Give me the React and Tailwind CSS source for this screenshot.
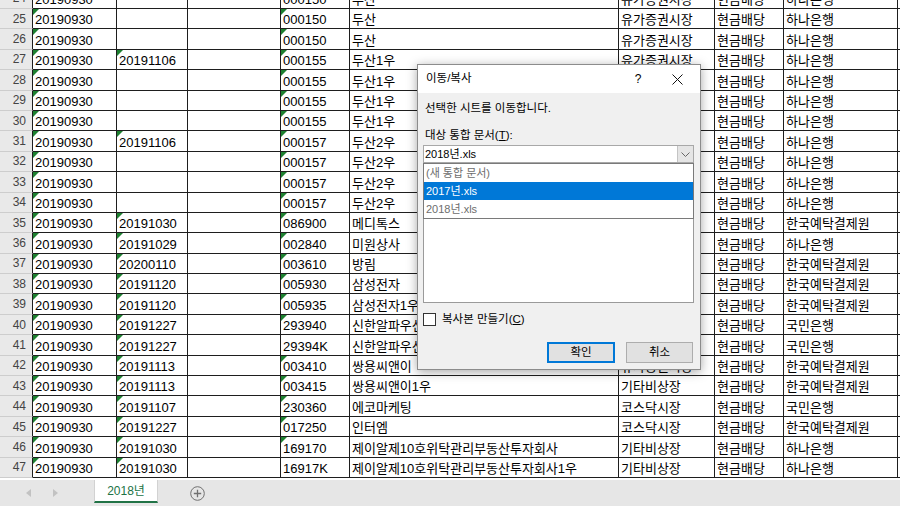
import React from "react";

// visible part of the sheet: rows 24..47
const rows = [
  [24, "20190930", "", "", "000150", "두산", "유가증권시장", "현금배당", "하나은행"],
  [25, "20190930", "", "", "000150", "두산", "유가증권시장", "현금배당", "하나은행"],
  [26, "20190930", "", "", "000150", "두산", "유가증권시장", "현금배당", "하나은행"],
  [27, "20190930", "20191106", "", "000155", "두산1우", "유가증권시장", "현금배당", "하나은행"],
  [28, "20190930", "", "", "000155", "두산1우", "유가증권시장", "현금배당", "하나은행"],
  [29, "20190930", "", "", "000155", "두산1우", "유가증권시장", "현금배당", "하나은행"],
  [30, "20190930", "", "", "000155", "두산1우", "유가증권시장", "현금배당", "하나은행"],
  [31, "20190930", "20191106", "", "000157", "두산2우", "유가증권시장", "현금배당", "하나은행"],
  [32, "20190930", "", "", "000157", "두산2우", "유가증권시장", "현금배당", "하나은행"],
  [33, "20190930", "", "", "000157", "두산2우", "유가증권시장", "현금배당", "하나은행"],
  [34, "20190930", "", "", "000157", "두산2우", "유가증권시장", "현금배당", "하나은행"],
  [35, "20190930", "20191030", "", "086900", "메디톡스", "코스닥시장", "현금배당", "한국예탁결제원"],
  [36, "20190930", "20191029", "", "002840", "미원상사", "유가증권시장", "현금배당", "하나은행"],
  [37, "20190930", "20200110", "", "003610", "방림", "유가증권시장", "현금배당", "한국예탁결제원"],
  [38, "20190930", "20191120", "", "005930", "삼성전자", "유가증권시장", "현금배당", "한국예탁결제원"],
  [39, "20190930", "20191120", "", "005935", "삼성전자1우", "유가증권시장", "현금배당", "한국예탁결제원"],
  [40, "20190930", "20191227", "", "293940", "신한알파우선주", "유가증권시장", "현금배당", "국민은행"],
  [41, "20190930", "20191227", "", "29394K", "신한알파우선주", "기타비상장", "현금배당", "국민은행"],
  [42, "20190930", "20191113", "", "003410", "쌍용씨앤이", "유가증권시장", "현금배당", "한국예탁결제원"],
  [43, "20190930", "20191113", "", "003415", "쌍용씨앤이1우", "기타비상장", "현금배당", "한국예탁결제원"],
  [44, "20190930", "20191107", "", "230360", "에코마케팅", "코스닥시장", "현금배당", "국민은행"],
  [45, "20190930", "20191227", "", "017250", "인터엠", "코스닥시장", "현금배당", "한국예탁결제원"],
  [46, "20190930", "20191030", "", "169170", "제이알제10호위탁관리부동산투자회사", "기타비상장", "현금배당", "하나은행"],
  [47, "20190930", "20191030", "", "16917K", "제이알제10호위탁관리부동산투자회사1우", "기타비상장", "현금배당", "하나은행"],
];

const widths = ["w-[84px]", "w-[71px]", "w-[93px]", "w-[69px]", "w-[269px]", "w-[96px]", "w-[69px]", "w-[114px]"];

const Cell = ({ w, text, flag }) => (
  <div className={`relative flex items-end ${w} shrink-0 border-r border-b border-[#1e1e1e] pl-[2px] overflow-hidden whitespace-nowrap`}>
    {flag && (
      <span className="absolute left-0 top-0 w-0 h-0 border-t-[6px] border-t-[#1d8030] border-r-[6px] border-r-transparent" />
    )}
    <span className="leading-[16px]">{text}</span>
  </div>
);

const Row = ({ r }) => {
  const [num, ...cells] = r;
  return (
    <div className="flex h-[20.4px]">
      <div className="w-[33px] shrink-0 flex items-center justify-end pr-[6px] bg-[#e9e9e9] border-r border-r-[#1e1e1e] border-b border-b-[#cdcdcd] text-[12px] text-[#444]">
        {num}
      </div>
      {cells.map((c, i) => {
        let flag = false;
        if (i === 0 || i === 1) flag = c !== "";
        if (i === 3) flag = /^\d+$/.test(c);
        return <Cell key={i} w={widths[i]} text={c} flag={flag} />;
      })}
      <div className="flex-1 border-b border-[#1e1e1e]" />
    </div>
  );
};

const Dialog = () => (
  <div className="absolute left-[417px] top-[64px] w-[284px] h-[306px] flex flex-col border border-[#8c8c8c] bg-[#f0f0f0] shadow-[0_2px_10px_rgba(0,0,0,0.35)] font-['Liberation_Sans','Noto_Sans_CJK_KR',sans-serif] text-[11.5px] text-black">
    {/* title bar */}
    <div className="h-[28px] shrink-0 bg-white flex items-center">
      <span className="pl-[8px] flex-1">이동/복사</span>
      <span className="w-[32px] text-center text-[12px]">?</span>
      <span className="w-[46px] flex items-center justify-center">
        <svg width="11" height="11" viewBox="0 0 11 11">
          <path d="M0.5 0.5 L10.5 10.5 M10.5 0.5 L0.5 10.5" stroke="#111" strokeWidth="1" fill="none" />
        </svg>
      </span>
    </div>

    <div className="flex-1 flex flex-col pl-[5px] pr-[6px]">
      <p className="mt-[7px] pl-[2px] leading-[16px]">선택한 시트를 이동합니다.</p>
      <p className="mt-[11px] pl-[2px] leading-[16px]">
        대상 통합 문서(<span className="underline">T</span>):
      </p>

      {/* combobox with open list */}
      <div className="relative mt-[2px] h-[18px] flex bg-white border border-[#a8a8a8]">
        <span className="flex-1 pl-[1px] leading-[16px] text-[11px]">2018년.xls</span>
        <span className="w-[16px] flex items-center justify-center bg-[#e5e5e5] border-l border-[#c4c4c4]">
          <svg width="9" height="5" viewBox="0 0 9 5">
            <path d="M0.5 0.5 L4.5 4.5 L8.5 0.5" stroke="#666" strokeWidth="1" fill="none" />
          </svg>
        </span>
        <div className="absolute left-[-1px] right-[-1px] top-[17px] h-[56px] bg-white border border-[#7a7a7a] flex flex-col z-10 text-[11px]">
          <div className="h-[18px] leading-[18px] pl-[2px] text-[#6d6d6d]">(새 통합 문서)</div>
          <div className="h-[18px] leading-[18px] pl-[2px] bg-[#0078d7] text-white">2017년.xls</div>
          <div className="h-[18px] leading-[18px] pl-[2px] text-[#6d6d6d]">2018년.xls</div>
        </div>
      </div>

      <div className="mt-[5px] h-[135px] bg-white border border-[#9a9a9a]" />

      <div className="mt-[10px] h-[13px] flex items-center">
        <span className="w-[13px] h-[13px] bg-white border border-[#333]" />
        <span className="ml-[6px] leading-[13px]">
          복사본 만들기(<span className="underline">C</span>)
        </span>
      </div>

      <div className="mt-[16px] flex justify-end gap-[11px] pr-[1px]">
        <button className="w-[68px] h-[21px] bg-[#e1e1e1] border-2 border-[#0078d7] text-[11.5px]">확인</button>
        <button className="w-[67px] h-[21px] bg-[#e1e1e1] border border-[#adadad] text-[11.5px]">취소</button>
      </div>
    </div>
  </div>
);

const TabBar = () => (
  <div className="h-[26px] shrink-0 flex bg-[#e6e6e6] font-['Liberation_Sans','Noto_Sans_CJK_KR',sans-serif]">
    <div className="w-[94px] flex items-center">
      <svg className="ml-[26px]" width="5" height="8" viewBox="0 0 5 8">
        <path d="M5 0 L0 4 L5 8 Z" fill="#c2c2c2" />
      </svg>
      <svg className="ml-[22px]" width="5" height="8" viewBox="0 0 5 8">
        <path d="M0 0 L5 4 L0 8 Z" fill="#c2c2c2" />
      </svg>
    </div>
    <div className="w-[64px] h-[23px] flex items-center justify-center bg-white border-x border-[#d2d2d2] border-b-2 border-b-[#217346] text-[12px] text-[#217346]">
      2018년
    </div>
    <div className="ml-[32px] flex items-center">
      <svg width="15" height="15" viewBox="0 0 15 15">
        <circle cx="7.5" cy="7.5" r="6.8" stroke="#707070" strokeWidth="1" fill="none" />
        <path d="M7.5 3.8 V11.2 M3.8 7.5 H11.2" stroke="#707070" strokeWidth="1.3" />
      </svg>
    </div>
  </div>
);

export default function App() {
  return (
    <div className="relative w-[900px] h-[506px] overflow-hidden flex flex-col bg-white">
      <div className="h-[480px] shrink-0 overflow-hidden font-['Liberation_Sans','Noto_Sans_CJK_KR',sans-serif] text-[13px] text-black">
        <div className="mt-[-11.4px]">
          {rows.map((r) => (
            <Row key={r[0]} r={r} />
          ))}
        </div>
      </div>
      <TabBar />
      <Dialog />
    </div>
  );
}
